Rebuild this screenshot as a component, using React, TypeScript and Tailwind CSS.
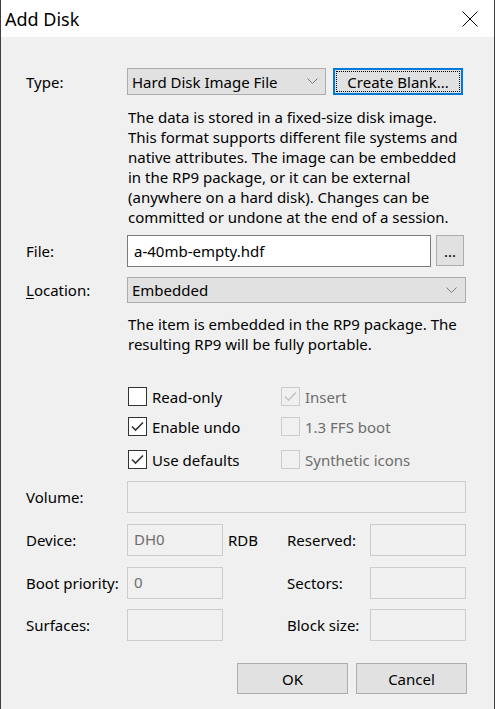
import React from 'react';

const Chevron = () => (
  <svg width="11" height="7" viewBox="0 0 11 7" className="shrink-0">
    <polyline points="0.5,0.5 5.5,5.5 10.5,0.5" fill="none" stroke="#7a7a7a" strokeWidth="1" />
  </svg>
);

function Check({ checked, disabled, label }: { checked?: boolean; disabled?: boolean; label: string }) {
  return (
    <div className="flex items-center h-[19px]">
      <div
        className={`w-[19px] h-[19px] border flex items-center justify-center ${
          disabled ? 'border-[#cccccc]' : 'border-[#333333] bg-white'
        }`}
      >
        {checked && (
          <svg width="15" height="13" viewBox="0 0 15 13">
            <polyline
              points="2,6.5 5.5,10 13,2.5"
              fill="none"
              stroke={disabled ? '#c4c4c4' : '#333333'}
              strokeWidth="1.6"
            />
          </svg>
        )}
      </div>
      <span className={`ml-[5px] ${disabled ? 'text-[#6d6d6d]' : 'text-black'}`}>{label}</span>
    </div>
  );
}

function Disabled({ w, value }: { w: string; value?: string }) {
  return (
    <div className={`${w} h-[32px] border border-[#cccccc] bg-[#f0f0f0] px-[6px] pt-[4px] text-[#6d6d6d] leading-[20px]`}>
      {value}
    </div>
  );
}

export default function App() {
  return (
    <div className="w-[495px] h-[709px] bg-[#f0f0f0] border-x border-[#3f3f3f] flex flex-col overflow-hidden font-['Noto_Sans',sans-serif] text-[15px] leading-[20px] text-black">
      {/* title bar */}
      <div className="h-[37px] bg-white flex items-center justify-between shrink-0">
        <span className="ml-[4px] text-[18px] leading-[24px] mt-[1px]">Add Disk</span>
        <svg width="16" height="16" viewBox="0 0 16 16" className="mr-[16px]">
          <path d="M0.5 0.5 L15.5 15.5 M15.5 0.5 L0.5 15.5" stroke="#000" strokeWidth="1" />
        </svg>
      </div>

      <div className="pl-[25px] flex flex-col">
        {/* type */}
        <div className="flex items-center mt-[31px]">
          <span className="w-[101px]">Type:</span>
          <div className="w-[199px] h-[27px] border border-[#adadad] bg-[#e1e1e1] flex items-center justify-between pl-[4px] pr-[7px]">
            <span>Hard Disk Image File</span>
            <Chevron />
          </div>
          <div className="ml-[7px] w-[130px] h-[27px] border-2 border-[#0078d7] bg-[#e1e1e1] p-[1px]">
            <div className="w-full h-full border border-dotted border-black flex items-center justify-center">
              Create Blank...
            </div>
          </div>
        </div>

        <div className="ml-[102px] mt-[12px]">
          <div>The data is stored in a fixed-size disk image.</div>
          <div>This format supports different file systems and</div>
          <div>native attributes. The image can be embedded</div>
          <div>in the RP9 package, or it can be external</div>
          <div>(anywhere on a hard disk). Changes can be</div>
          <div>committed or undone at the end of a session.</div>
        </div>

        {/* file */}
        <div className="flex items-center mt-[8px]">
          <span className="w-[101px]">File:</span>
          <div className="w-[304px] h-[32px] border border-[#7a7a7a] bg-white flex items-center pl-[6px]">
            a-40mb-empty.hdf
          </div>
          <div className="ml-[5px] w-[28px] h-[31px] border border-[#adadad] bg-[#e1e1e1] flex items-end justify-center pb-[6px] leading-none self-start">
            ...
          </div>
        </div>

        {/* location */}
        <div className="flex items-center mt-[10px]">
          <span className="w-[101px]">
            <span className="underline underline-offset-2">L</span>ocation:
          </span>
          <div className="w-[339px] h-[26px] border border-[#adadad] bg-[#e1e1e1] flex items-center justify-between pl-[4px] pr-[8px]">
            <span>Embedded</span>
            <Chevron />
          </div>
        </div>

        <div className="ml-[102px] mt-[11px]">
          <div>The item is embedded in the RP9 package. The</div>
          <div>resulting RP9 will be fully portable.</div>
        </div>

        {/* checkboxes */}
        <div className="ml-[102px] mt-[33px] grid grid-cols-[153px_1fr] gap-y-[11px]">
          <Check label="Read-only" />
          <Check label="Insert" checked disabled />
          <Check label="Enable undo" checked />
          <Check label="1.3 FFS boot" disabled />
          <div className="-mt-[-3px]">
            <Check label="Use defaults" checked />
          </div>
          <div className="mt-[3px]">
            <Check label="Synthetic icons" disabled />
          </div>
        </div>

        {/* geometry */}
        <div className="flex items-center mt-[12px]">
          <span className="w-[101px]">Volume:</span>
          <Disabled w="w-[339px]" />
        </div>

        <div className="flex items-center mt-[11px]">
          <span className="w-[101px]">Device:</span>
          <Disabled w="w-[96px]" value="DH0" />
          <span className="ml-[5px] w-[59px]">RDB</span>
          <span className="w-[83px]">Reserved:</span>
          <Disabled w="w-[96px]" />
        </div>

        <div className="flex items-center mt-[11px]">
          <span className="w-[101px]">Boot priority:</span>
          <Disabled w="w-[96px]" value="0" />
          <span className="ml-[5px] w-[59px]"></span>
          <span className="w-[83px]">Sectors:</span>
          <Disabled w="w-[96px]" />
        </div>

        <div className="flex items-center mt-[10px]">
          <span className="w-[101px]">Surfaces:</span>
          <Disabled w="w-[96px]" />
          <span className="ml-[5px] w-[59px]"></span>
          <span className="w-[83px]">Block size:</span>
          <Disabled w="w-[96px]" />
        </div>

        {/* buttons */}
        <div className="flex justify-end gap-[8px] mt-[22px] mr-[27px]">
          <div className="w-[111px] h-[31px] border border-[#adadad] bg-[#e1e1e1] flex items-center justify-center">OK</div>
          <div className="w-[111px] h-[31px] border border-[#adadad] bg-[#e1e1e1] flex items-center justify-center">Cancel</div>
        </div>
      </div>
    </div>
  );
}
